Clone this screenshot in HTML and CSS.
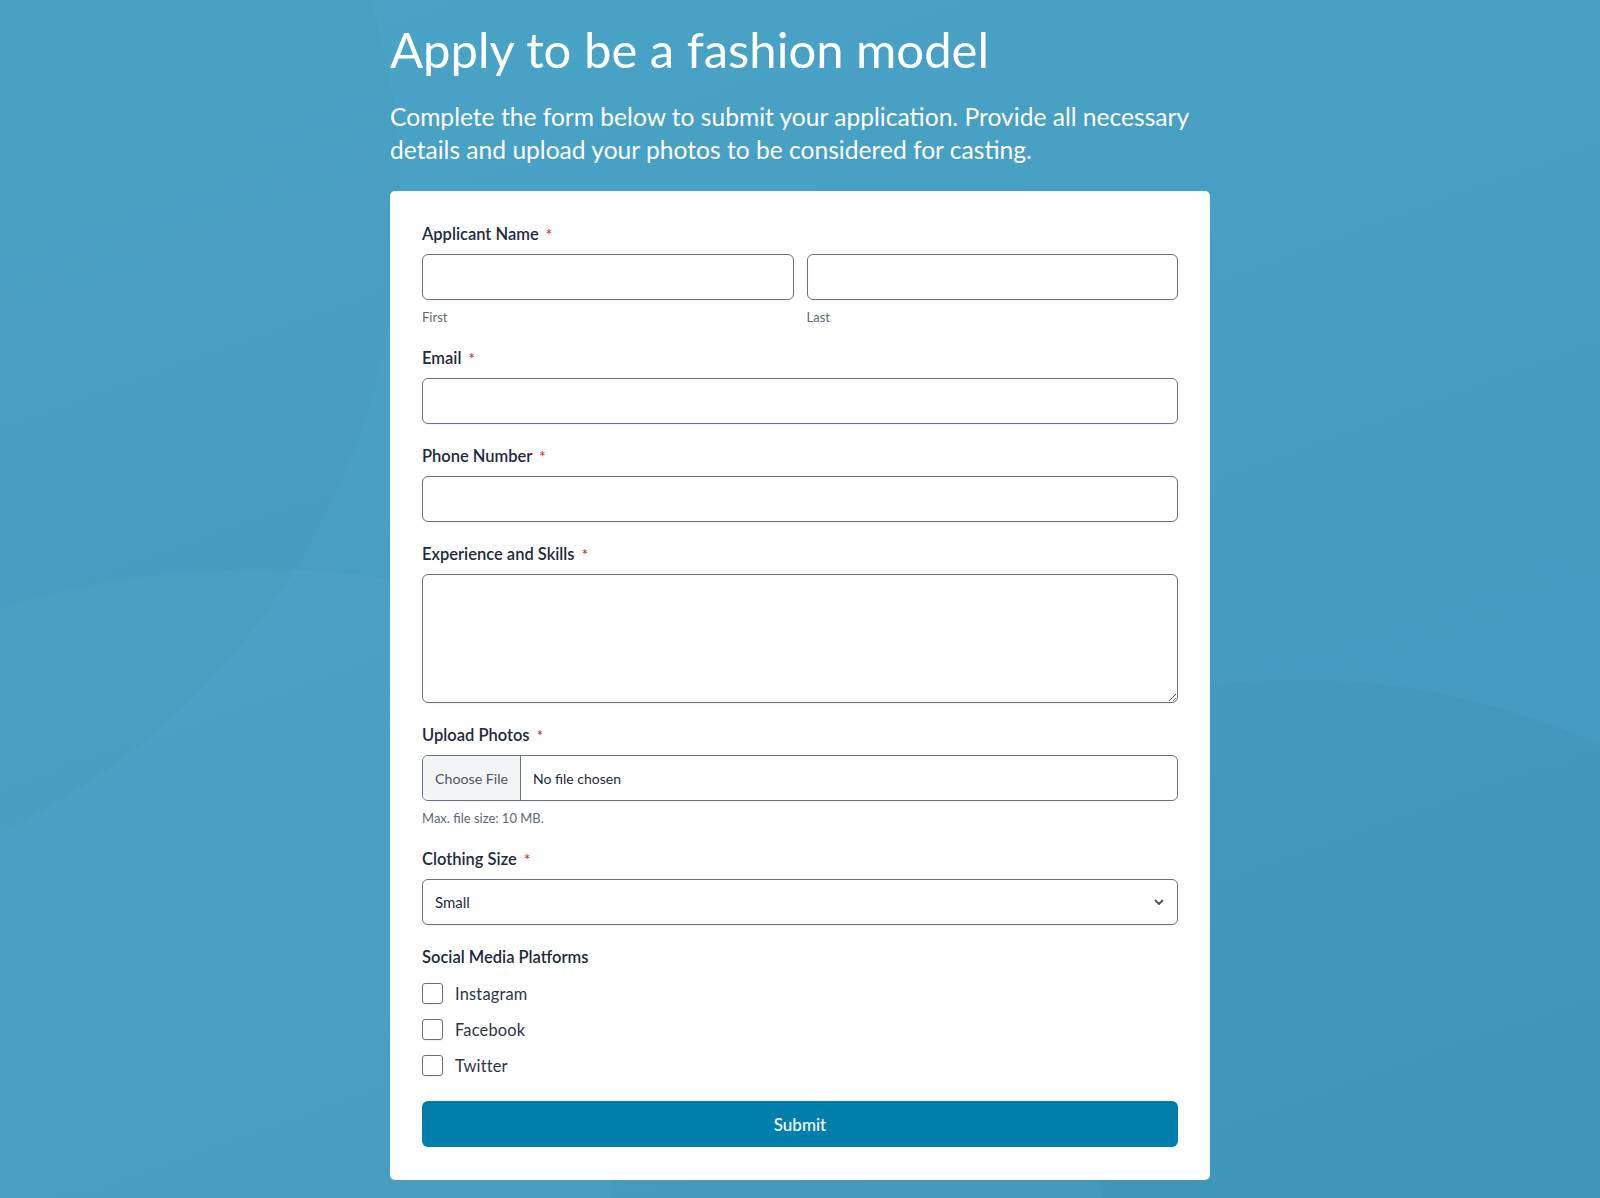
FILE: index.html
```html
<!DOCTYPE html>
<html lang="en">
<head>
<meta charset="utf-8">
<title>Apply to be a fashion model</title>
<link rel="stylesheet" href="styles.css">
</head>
<body>
<div class="page">
  <header class="intro">
    <h1 class="title">Apply to be a fashion model</h1>
    <p class="lead">Complete the form below to submit your application. Provide all necessary details and upload your photos to be considered for casting.</p>
  </header>
  <form class="card">
    <div class="field">
      <div class="label">Applicant Name <span class="req">*</span></div>
      <div class="name-row">
        <div class="name-col">
          <input class="control" type="text">
          <div class="sub">First</div>
        </div>
        <div class="name-col">
          <input class="control" type="text">
          <div class="sub">Last</div>
        </div>
      </div>
    </div>
    <div class="field">
      <div class="label">Email <span class="req">*</span></div>
      <input class="control" type="email">
    </div>
    <div class="field">
      <div class="label">Phone Number <span class="req">*</span></div>
      <input class="control" type="tel">
    </div>
    <div class="field">
      <div class="label">Experience and Skills <span class="req">*</span></div>
      <textarea class="control area"></textarea>
    </div>
    <div class="field">
      <div class="label">Upload Photos <span class="req">*</span></div>
      <input class="control file" type="file">
      <div class="sub">Max. file size: 10 MB.</div>
    </div>
    <div class="field">
      <div class="label">Clothing Size <span class="req">*</span></div>
      <div class="select-wrap">
        <select class="control select">
          <option>Small</option>
          <option>Medium</option>
          <option>Large</option>
        </select>
        <svg class="chev" width="12" height="12" viewBox="0 0 12 12"><path d="M2.5 4.5 L6 8 L9.5 4.5" fill="none" stroke="#4b5563" stroke-width="1.8" stroke-linecap="round" stroke-linejoin="round"/></svg>
      </div>
    </div>
    <div class="field">
      <div class="label">Social Media Platforms</div>
      <div class="checks">
        <label class="check"><span class="box"></span>Instagram</label>
        <label class="check"><span class="box"></span>Facebook</label>
        <label class="check"><span class="box"></span>Twitter</label>
      </div>
    </div>
    <button class="submit" type="button">Submit</button>
  </form>
</div>
</body>
</html>
```

FILE: styles.css
```css
* { box-sizing: border-box; }
html, body { margin: 0; padding: 0; }
body {
  min-height: 1198px;
  font-family: Lato, "Noto Sans", sans-serif;
  background-color: #469fc3;
  background-image:
    radial-gradient(circle at 260px 1450px, rgba(255,255,255,0.025) 0 880px, rgba(0,0,0,0) 881px),
    radial-gradient(circle at 1300px 1400px, rgba(0,0,0,0.025) 0 720px, rgba(0,0,0,0) 721px),
    radial-gradient(circle at -300px 200px, rgba(0,0,0,0.02) 0 700px, rgba(0,0,0,0) 701px),
    linear-gradient(160deg, #4aa4c6 0%, #459ec2 50%, #4099be 100%);
}
.page {
  width: 820px;
  margin: 0 auto;
  padding-top: 20px;
  padding-bottom: 18px;
}
.intro { color: #fff; }
.title {
  margin: 0;
  font-size: 49px;
  font-weight: 400;
  line-height: 58px;
}
.lead {
  margin: 22px 0 0;
  font-size: 24.6px;
  line-height: 33px;
  font-weight: 400;
}
.card {
  margin-top: 25px;
  background: #fff;
  border-radius: 5px;
  padding: 31px 32px 33px;
  display: flex;
  flex-direction: column;
  gap: 20px;
}
.field { display: flex; flex-direction: column; }
.label {
  font-size: 16.5px;
  line-height: 24px;
  font-weight: 600;
  color: #1d2a3f;
  margin-bottom: 8px;
}
.req {
  color: #cf3b22;
  font-size: 15px;
  line-height: 0;
  margin-left: 3px;
}
.name-row { display: flex; gap: 13px; }
.name-col { flex: 1; display: flex; flex-direction: column; }
.control {
  display: block;
  width: 100%;
  height: 46px;
  border: 1px solid #687284;
  border-radius: 6px;
  background: #fff;
  box-shadow: 0 1px 2px rgba(16,24,40,0.06);
  font-family: Lato, "Noto Sans", sans-serif;
  font-size: 14px;
  color: #1d2a3f;
  padding: 0 12px;
  margin: 0;
}
.area {
  height: 129px;
  padding: 10px 12px;
  resize: vertical;
}
.sub {
  margin-top: 8px;
  font-size: 13px;
  line-height: 18px;
  color: #5f6876;
}
.file {
  padding: 0;
  overflow: hidden;
  line-height: 44px;
  font-size: 14px;
  color: #1d2a3f;
}
.file::file-selector-button {
  height: 44px;
  margin: 0 12px 0 0;
  padding: 0 12px;
  border: none;
  border-right: 1px solid #687284;
  background: #f3f4f6;
  color: #4b5563;
  font-family: Lato, "Noto Sans", sans-serif;
  font-size: 14.2px;
}
.select-wrap { position: relative; }
.select {
  appearance: none;
  -webkit-appearance: none;
  padding-right: 36px;
  font-size: 15px;
}
.chev {
  position: absolute;
  right: 13px;
  top: 17px;
  pointer-events: none;
}
.checks {
  margin-top: 4px;
  display: flex;
  flex-direction: column;
  gap: 12px;
}
.check {
  display: flex;
  align-items: center;
  height: 24px;
  font-size: 16.4px;
  color: #2b3546;
  letter-spacing: 0.2px;
}
.box {
  width: 21px;
  height: 21px;
  border: 1px solid #687284;
  border-radius: 3px;
  margin-right: 12px;
  background: #fff;
  box-shadow: 0 1px 2px rgba(16,24,40,0.06);
}
.submit {
  margin-top: 4px;
  height: 46px;
  border: none;
  border-radius: 6px;
  background: #007fad;
  color: #fff;
  font-family: Lato, "Noto Sans", sans-serif;
  font-size: 17px;
  font-weight: 500;
  cursor: pointer;
}
```
